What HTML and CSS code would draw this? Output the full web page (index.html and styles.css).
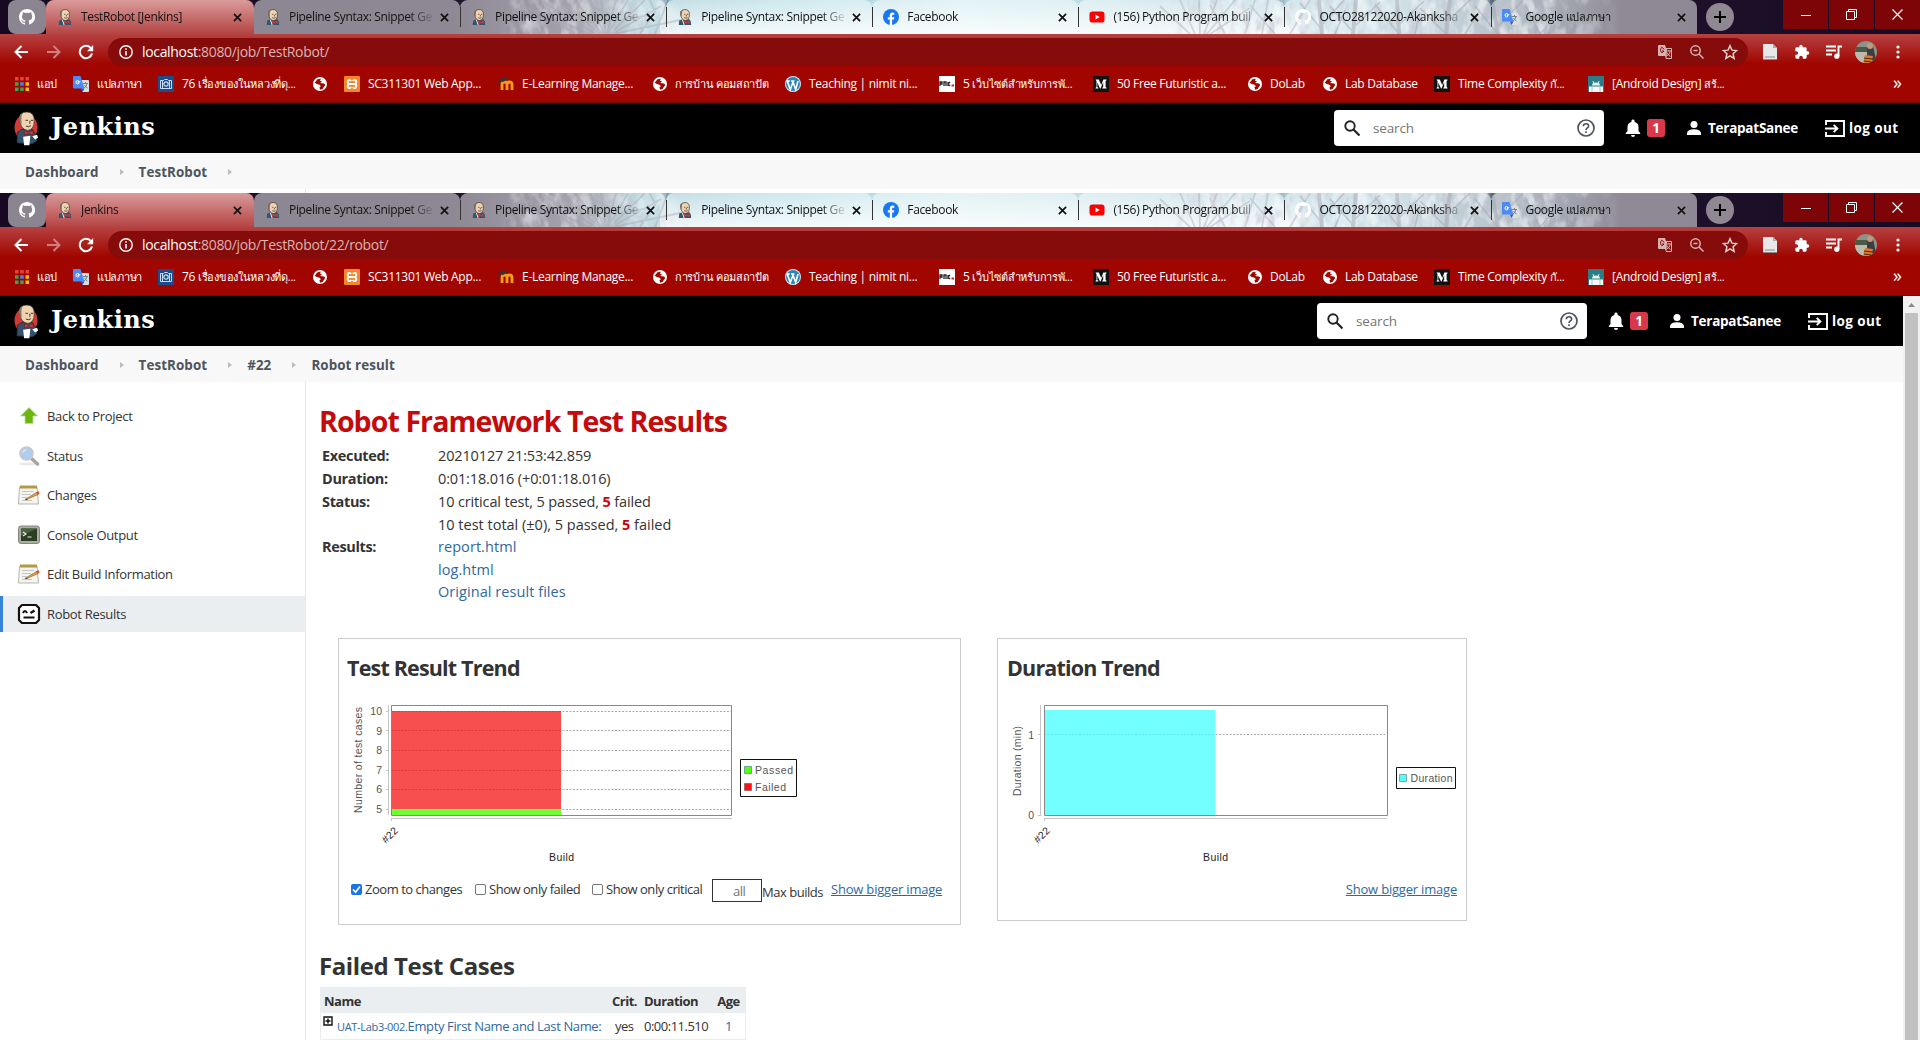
FILE: index.html
```html
<!DOCTYPE html>
<html lang="en">
<head>
<meta charset="utf-8">
<title>Jenkins</title>
<link rel="stylesheet" href="styles.css">
</head>
<body>
<svg class="defs" width="0" height="0" aria-hidden="true">
  <defs>
    <linearGradient id="sky" x1="0" x2="1" y1="0" y2="0">
      <stop offset="0" stop-color="#170922"/><stop offset=".235" stop-color="#1c1029"/>
      <stop offset=".3" stop-color="#4a4658"/><stop offset=".335" stop-color="#86b9c6"/>
      <stop offset=".4" stop-color="#9bd0db"/><stop offset=".5" stop-color="#c8e6ea"/>
      <stop offset=".57" stop-color="#bcdde4"/><stop offset=".64" stop-color="#a5cdd8"/>
      <stop offset=".72" stop-color="#a9cbd6"/><stop offset=".79" stop-color="#657a8c"/>
      <stop offset=".845" stop-color="#1f142d"/><stop offset="1" stop-color="#170922"/>
    </linearGradient>
    <linearGradient id="haze" x1="0" x2="0" y1="0" y2="1">
      <stop offset="0" stop-color="#fff" stop-opacity="0"/><stop offset="1" stop-color="#fff" stop-opacity=".75"/>
    </linearGradient>
    <linearGradient id="edge" x1="0" x2="1" y1="0" y2="0">
      <stop offset="0" stop-color="#000"/><stop offset=".15" stop-color="#fff"/><stop offset=".85" stop-color="#fff"/><stop offset="1" stop-color="#000"/>
    </linearGradient>
    <mask id="fadeL"><rect x="500" width="190" height="34" fill="url(#edge)"/></mask>
    <mask id="fadeR"><rect x="1150" width="470" height="34" fill="url(#edge)"/></mask>
    <filter id="snow" x="0" y="0" width="1" height="1">
      <feTurbulence type="fractalNoise" baseFrequency=".09 .05" numOctaves="3" seed="7"/>
      <feColorMatrix values="0 0 0 0 .88  0 0 0 0 .96  0 0 0 0 .98  4 0 0 0 -1.8"/>
    </filter>
    <filter id="twigs" x="0" y="0" width="1" height="1">
      <feTurbulence type="fractalNoise" baseFrequency=".12 .06" numOctaves="3" seed="21"/>
      <feColorMatrix values="0 0 0 0 .28  0 0 0 0 .26  0 0 0 0 .36  0 4 0 0 -1.9"/>
    </filter>
    <symbol id="wall" viewBox="0 0 1920 34">
      <rect width="1920" height="34" fill="url(#sky)"/>
      <rect x="660" width="640" height="34" fill="url(#haze)"/>
      <g mask="url(#fadeL)"><rect x="500" width="190" height="34" filter="url(#twigs)" opacity=".5"/><rect x="500" width="190" height="34" filter="url(#snow)" opacity=".4"/></g>
      <g mask="url(#fadeR)"><rect x="1150" width="470" height="34" filter="url(#twigs)" opacity=".55"/><rect x="1150" width="470" height="34" filter="url(#snow)" opacity=".55"/></g>
      <g fill="none" stroke="#4a4660" stroke-width="1.8" opacity=".4">
        <path d="M600 34 560 0M602 34 575 0M604 34 590 0M606 34 601 0M607 34 616 0M608 34 628 0M610 34 645 0M612 34 661 6M596 34 540 0M590 34 520 4M614 34 680 20M600 22 570 20M610 15 590 5M620 20 650 15M640 34 655 12 650 0M655 34 668 0M575 34 545 12"/>
        <path d="M1190 34 1160 6M1195 34 1180 0M1200 34 1199 0M1204 34 1217 0M1207 34 1235 0M1210 34 1250 8M1225 34 1210 5M1245 34 1255 0M1262 34 1268 0M1275 34 1250 5M1290 34 1310 0"/>
      </g>
      <g fill="none" stroke="#474a60" opacity=".5">
        <path stroke-width="4" d="M1322 34 1319 0M1353 34 1356 0M1399 34 1397 0M1446 34 1450 0M1498 34 1492 0"/>
        <path stroke-width="1.6" d="M1322 30 1300 3M1322 25 1344 0M1353 32 1330 6M1353 28 1380 2M1399 34 1375 4M1399 25 1424 1M1446 34 1420 8M1446 23 1470 0M1498 34 1475 6M1498 27 1523 0M1540 34 1525 4M1540 34 1570 0M1335 34 1345 10M1415 34 1420 12M1465 34 1480 10"/>
      </g>
    </symbol>
    <symbol id="github" viewBox="0 0 16 16"><path fill="#fff" d="M8 0C3.58 0 0 3.58 0 8c0 3.54 2.29 6.53 5.47 7.59.4.07.55-.17.55-.38v-1.49C3.78 14.2 3.3 12.66 3.3 12.66c-.36-.93-.89-1.17-.89-1.17C1.7 11 2.5 11 2.5 11c.8.06 1.23.83 1.23.83.7 1.2 1.87.87 2.33.66.07-.52.28-.87.5-1.07C4.8 11.2 3 10.5 3 7.47c0-.88.3-1.6.82-2.15-.08-.2-.36-1.02.08-2.12 0 0 .67-.22 2.2.82a7.7 7.7 0 0 1 4 0c1.53-1.04 2.2-.82 2.2-.82.44 1.1.16 1.92.08 2.12.51.56.82 1.27.82 2.15 0 3.07-1.87 3.75-3.65 3.95.29.25.54.73.54 1.48v2.31c0 .21.15.46.55.38A8 8 0 0 0 8 0z"/></symbol>
    <symbol id="butler" viewBox="0 0 16 18">
      <path d="M1 18 1.500 13 5 11.500 13 11.500 14.500 14 15 18z" fill="#33566f"/>
      <path d="M3 6Q2.500 1 8 .6 13 .6 13 6 13 12.500 8.500 13 4 12.500 3 6z" fill="#efd3b1" stroke="#332c28" stroke-width=".7"/>
      <path d="M3 7Q1.500 1.500 5.500 1 4 3.500 4.300 7L4 9z" fill="#777069"/>
      <path d="M7 6h1.500M10.300 6h1.500M7 9.800q2 1 4 0M9.500 6.500v2" fill="none" stroke="#3b2b25" stroke-width=".8"/>
      <path d="m7 13 3 1.500 3-1.500v4l-3-1.500L7 17z" fill="#d33833"/><path d="M5 12 7 18" stroke="#fff" stroke-width="1"/>
    </symbol>
    <symbol id="translate" viewBox="0 0 16 16">
      <path fill="#dedede" d="M6.500 4H15q1 0 1 1v10q0 1-1 1H9.500z"/><path fill="#4c8bf5" d="M1 0h6.500L11.500 12.500H1q-1 0-1-1V1q0-1 1-1z"/><path fill="#2c56c4" d="M8 12.500h3.500L9.500 16z"/>
      <path d="M7.300 5.700H5v1h1.200Q5.800 8 4.500 8 3 7.900 3 6.200 3 4.600 4.500 4.500q.8 0 1.400.6" fill="none" stroke="#fff"/><path d="M10 7.500h5M12.500 6v1.500M14 7.500q-.5 3-3 4.500M11.500 9q1 2 3 3" fill="none" stroke="#6b7888" stroke-width=".9"/>
    </symbol>
    <symbol id="globe" viewBox="0 0 14 14"><circle cx="7" cy="7" r="7" fill="#fff"/><path fill="#a00500" d="M4.500 2.300 8 1.700 6.800 3.400 9 4.500 7 6l4 .5q1.300.4 1 1.800L9.500 12 7 12.700 6.500 10l1.500-.8L6.500 7.800 3.800 7 1.700 5.700z"/></symbol>
    <symbol id="close" viewBox="0 0 10 10"><path d="m1 1 8 8M9 1 1 9" stroke="#111" stroke-width="1.9"/></symbol>
    <symbol id="facebook" viewBox="0 0 16 16"><circle cx="8" cy="8" r="8" fill="#1977f3"/><path fill="#fff" d="M6.800 16v-5.500H4.800V8.200h2V6.400Q6.800 3.500 9.600 3.500l1.700.2v2h-1.100Q9.100 5.700 9.100 6.800v1.400h2.200l-.4 2.300H9.100V16z"/></symbol>
    <symbol id="youtube" viewBox="0 0 16 16"><rect x=".5" y="2.500" width="15" height="11" rx="2.800" fill="#f00"/><path d="m6.500 5.500 4.200 2.500-4.200 2.500z" fill="#fff"/></symbol>
    <symbol id="back" viewBox="0 0 14 14"><path d="M14 7H2M7.500 1 1.500 7l6 6" fill="none" stroke="currentColor" stroke-width="2"/></symbol>
    <symbol id="reload" viewBox="0 0 16 16"><path d="M13 4.300A6.200 6.200 0 1 0 14 9.500" fill="none" stroke="#fff" stroke-width="2.100"/><path d="M15.200 1v6.200H9z" fill="#fff"/></symbol>
    <symbol id="info" viewBox="0 0 14 14"><circle cx="7" cy="7" r="6.200" fill="none" stroke="#fff" stroke-width="1.400"/><path d="M7 6v4.500M7 3.300v1.500" stroke="#fff" stroke-width="1.600"/></symbol>
    <symbol id="trans2" viewBox="0 0 14 14"><path fill="#d6b3b3" d="M1 0h6l1 3h5q1 0 1 1v9q0 1-1 1H8l-1-3H1q-1 0-1-1V1q0-1 1-1z"/><path d="M9 4h4v9H8.500" fill="#850c0b"/><path d="M6 4.500Q3-.5 2.500 5.500q1 4 3.500.5H4" fill="none" stroke="#850c0b" stroke-width="1"/><path d="M8.500 6h4.500M10.800 5v1M12.300 6.500q-1 3.500-3.800 4.500M9 7.500q1 2.500 3.500 4" fill="none" stroke="#d6b3b3" stroke-width="1"/></symbol>
    <symbol id="zoomout" viewBox="0 0 14 14"><circle cx="5.500" cy="5.500" r="4.700" fill="none" stroke="#d6b3b3" stroke-width="1.500"/><path d="m9 9 4.500 4.500M3.500 5.500h4" stroke="#d6b3b3" stroke-width="1.500"/></symbol>
    <symbol id="star" viewBox="0 0 24 24"><path d="m12 2.500 2.900 6.700 7.100.6-5.400 4.800 1.600 7.100-6.200-3.800-6.200 3.800 1.600-7.100L2 9.800l7.100-.6z" fill="none" stroke="#e6d0d0" stroke-width="2.200"/></symbol>
    <symbol id="doc" viewBox="0 0 14 16"><path d="M0 0h10l4 4v12H0z" fill="#e8e8e8"/><path d="M10 0v4h4z" fill="#aaa"/><path d="M2 13h10M0 15.500h14" stroke="#888"/></symbol>
    <symbol id="puzzle" viewBox="0 0 24 24"><path fill="#fff" d="M20.500 11H19V7a2 2 0 0 0-2-2h-4V3.500a2.500 2.500 0 0 0-5 0V5H4a2 2 0 0 0-2 2v3.800h1.500a2.700 2.700 0 0 1 0 5.400H2V20a2 2 0 0 0 2 2h3.800v-1.500a2.700 2.700 0 0 1 5.400 0V22H17a2 2 0 0 0 2-2v-4h1.500a2.500 2.500 0 0 0 0-5z"/></symbol>
    <symbol id="media" viewBox="0 0 16 14"><path d="M0 1.500h10M0 5.500h10M0 9.500h6" stroke="#fff" stroke-width="1.800"/><path d="M16 1.500h-3.500V11" stroke="#fff" stroke-width="1.900" fill="none"/><circle cx="10.800" cy="11.200" r="2.600" fill="#fff"/></symbol>
    <symbol id="avatar" viewBox="0 0 22 22"><clipPath id="round"><circle cx="11" cy="11" r="11"/></clipPath><g clip-path="url(#round)"><path fill="#8a9385" d="M0 0h22v22H0z"/><path fill="#4b5a44" d="M0 6h12v5H0z"/><path fill="#bdb9ac" d="M0 11h14v11H0z"/><path fill="#3b3c44" d="m12 6 6-1 3 14H12z"/><circle cx="15" cy="5" r="3" fill="#c39a80"/><path fill="#e37a20" d="m10 14 8 1-2 7H8z"/><path d="m9 17 8 1M9 20l7 1" stroke="#402616"/></g></symbol>
    <symbol id="dots" viewBox="0 0 4 14"><circle cx="2" cy="2" r="1.600" fill="#fff"/><circle cx="2" cy="7" r="1.600" fill="#fff"/><circle cx="2" cy="12" r="1.600" fill="#fff"/></symbol>
    <symbol id="apps" viewBox="0 0 14 14"><path fill="#ea4335" d="M0 0h3.500v3.500H0zM5.200 0h3.500v3.500H5.200zM10.500 0H14v3.500h-3.500z"/><path fill="#34a853" d="M0 5.200h3.500v3.500H0zM0 10.500h3.500V14H0zM5.200 10.500h3.500V14H5.200z"/><path fill="#4285f4" d="M5.200 5.200h3.500v3.500H5.200z"/><path fill="#fbbc05" d="M10.500 5.200H14v3.500h-3.500zM10.500 10.500H14V14h-3.500z"/></symbol>
    <symbol id="camera" viewBox="0 0 16 16"><path fill="#1c4c8c" d="M0 0h16v16H0z"/><path d="M2.500 12.500v-8h3l1-1h3l1 1h3v8zM4.500 5v7M11.500 5v7" fill="none" stroke="#c9dcf3" stroke-width="1"/><circle cx="8" cy="8" r="2.200" fill="none" stroke="#c9dcf3" stroke-width="1.200"/></symbol>
    <symbol id="xampp" viewBox="0 0 16 16"><rect width="16" height="16" rx="1" fill="#f5842a"/><path d="M7.200 5Q6 3.500 4.500 4 2.800 5.500 4.500 8 2.800 10.500 4.500 12q1.700.5 2.800-1M8.800 5Q10 3.500 11.500 4q1.700 1.500 0 4 1.700 2.500 0 4-1.700.5-2.800-1M5 8h6" fill="none" stroke="#fff" stroke-width="1.800"/></symbol>
    <symbol id="moodle" viewBox="0 0 16 16"><path d="M4 14V8.500Q4 6 6.500 6T9 8.500V14M9 14V8.500Q9 6 11.500 6T14 8.500V14" fill="none" stroke="#f59b1b" stroke-width="2.800"/><path d="M0 4 7 1l3 2-5 3z" fill="#333"/><path d="M1 4.500v5" stroke="#333"/></symbol>
    <symbol id="wp" viewBox="0 0 16 16"><circle cx="8" cy="8" r="8" fill="#d5eaf4"/><circle cx="8" cy="8" r="7" fill="#2a86b8"/><path d="m2.300 5 3 8.500L8 6l2.700 7.500L13 5M1.800 5h3M6 5h3.500" fill="none" stroke="#fff" stroke-width="1.600"/></symbol>
    <symbol id="park" viewBox="0 0 16 16"><path fill="#fff" d="M0 0h16v16H0z"/><path d="M1 10V6h2v2H1M5 10V6h2v4M9 10V6M9 8l2-2M9 8l2 2" fill="none" stroke="#222" stroke-width="1.300"/><path d="M12.500 9.500H15" stroke="#c22" stroke-width="2"/></symbol>
    <symbol id="medium" viewBox="0 0 16 16"><path fill="#111" d="M0 0h16v16H0z"/><path d="M2.500 3.500h3.300L8.200 9l2.200-5.500h3.100v.8l-.9.800v5.900l.9.800v.7H9.300v-.7l.9-.8V6.200L7.500 12.500H7L4.300 6.500V11l1.100 1v.5H2.500V12l1-1V5z" fill="#fff"/></symbol>
    <symbol id="android" viewBox="0 0 16 16"><path fill="#2b7e88" d="M0 0h16v16H0z"/><path d="M1 10.500h14V16H1z" fill="#f4fbfa"/><path d="M4 9.500q0-3 4-3t4 3z" fill="#e9f6f3"/><path d="m4.800 5 1 2M11.200 5l-1 2" stroke="#e9f6f3"/><path d="M4 10.500V16M12 10.500V16" stroke="#9cc"/></symbol>
    <symbol id="logo" viewBox="0 0 26 36">
      <ellipse cx="12.500" cy="17" rx="12" ry="13.500" fill="#cf3a33"/>
      <path d="M3 33 3.500 22 8 19h11l4 6 1 6-5 3z" fill="#34506a" stroke="#15202b" stroke-width=".7"/>
      <path d="M6 10Q5 1 13 .8 21.500 1 21 10 21 19 14.500 20 7 19 6 10z" fill="#efd3b1" stroke="#3b332e" stroke-width=".7"/>
      <path d="M6 12Q3.500 4 9 2 7 6 8 12l-.5 3z" fill="#86796e"/>
      <path d="M12 9.500h2.500M17.500 9.500H20M12.500 15.500q3 1.500 5-.5M16.500 10v3" fill="none" stroke="#3b2b25" stroke-width="1"/>
      <path d="m11 20 4 2 5-2v5l-5-2-4 2z" fill="#d33833" stroke="#5c1512" stroke-width=".5"/>
      <path d="M9.500 26.500 17 25.500 16 35.500h-5.500zM19 26l5-1.500 1 3-3 2z" fill="#fff"/>
    </symbol>
    <symbol id="search" viewBox="0 0 16 16"><circle cx="6" cy="6" r="4.700" fill="none" stroke="#222" stroke-width="1.900"/><path d="m9.500 9.500 6 6" stroke="#222" stroke-width="2.200"/></symbol>
    <symbol id="help" viewBox="0 0 18 18"><circle cx="9" cy="9" r="8" fill="none" stroke="#4d545d" stroke-width="1.700"/><path d="M6.300 7.200Q6.400 4.700 9 4.700t2.700 2.300Q11.700 8.200 9.900 9.300 9 10 9 11M9 12.300v1.800" fill="none" stroke="#4d545d" stroke-width="1.600"/></symbol>
    <symbol id="bell" viewBox="0 0 16 18"><path fill="#fff" d="M8 18a2 2 0 0 0 2-2H6a2 2 0 0 0 2 2zM13.500 12V8Q13.400 4 9.600 3V2Q9.500.6 8 .6T6.400 2v1Q2.600 4 2.500 8v4L.8 14v1h14.400v-1z"/></symbol>
    <symbol id="person" viewBox="0 0 14 14"><circle cx="7" cy="3.500" r="3.500" fill="#fff"/><path d="M0 14v-2q.5-3.500 7-3.700 6.500.2 7 3.700v2z" fill="#fff"/></symbol>
    <symbol id="logout" viewBox="0 0 20 17"><path d="M1 5V1h18v15H1v-4" fill="none" stroke="#fff" stroke-width="1.900"/><path d="M0 8.500h12M8.700 4.800l3.700 3.700-3.700 3.700" fill="none" stroke="#fff" stroke-width="1.900"/></symbol>
    <symbol id="notepad" viewBox="0 0 22 20"><path d="M1.500 2h17.500L20.500 19H.5z" fill="#f4f4f1" stroke="#b5b5b0"/><path d="M2 .5h17v3H2z" fill="#b19a45"/><path d="M4 6.500h12M4 9.500h9M4 12.500h5M4 15.500h10" stroke="#c6c6c6"/><path d="m7 14.500 11.500-7 1.500 2-11 5z" fill="#d9a24a" stroke="#8a6023" stroke-width=".6"/><path d="m18 7.500 2.500-1.300 1.200 2L20 9.500z" fill="#d9452b"/><path d="m6.500 15 2.500-1.500.6 1z" fill="#333"/></symbol>
  </defs>
</svg>

<section class="browser">
  <div class="tabstrip">
    <svg class="wall" preserveAspectRatio="none"><use href="#wall"/></svg>
    <div class="tab pinned"><svg class="i16"><use href="#github"/></svg></div>
    <div class="tab active"><svg class="fav"><use href="#butler"/></svg><span class="title">TestRobot [Jenkins]</span><svg class="x"><use href="#close"/></svg></div>
    <div class="tab"><svg class="fav"><use href="#butler"/></svg><span class="title">Pipeline Syntax: Snippet Ge</span><svg class="x"><use href="#close"/></svg></div>
    <div class="tab line"><svg class="fav"><use href="#butler"/></svg><span class="title">Pipeline Syntax: Snippet Ge</span><svg class="x"><use href="#close"/></svg></div>
    <div class="tab line"><svg class="fav"><use href="#butler"/></svg><span class="title">Pipeline Syntax: Snippet Ge</span><svg class="x"><use href="#close"/></svg></div>
    <div class="tab line"><svg class="fav"><use href="#facebook"/></svg><span class="title">Facebook</span><svg class="x"><use href="#close"/></svg></div>
    <div class="tab line"><svg class="fav"><use href="#youtube"/></svg><span class="title">(156) Python Program buil</span><svg class="x"><use href="#close"/></svg></div>
    <div class="tab line"><svg class="fav"><use href="#github"/></svg><span class="title">OCTO28122020-Akanksha</span><svg class="x"><use href="#close"/></svg></div>
    <div class="tab line"><svg class="fav"><use href="#translate"/></svg><span class="title">Google <span class="thai">แปลภาษา</span></span><svg class="x"><use href="#close"/></svg></div>
    <div class="newtab"><svg width="12" height="12" viewBox="0 0 12 12"><path d="M6 0v12M0 6h12" stroke="#000" stroke-width="2"/></svg></div>
    <div class="winbtns">
      <span><svg width="10" height="10"><path d="M0 5.500h10" stroke="#fff"/></svg></span>
      <span><svg width="11" height="11"><path d="M.5 2.500h8v8h-8zM2.500 2V.5h8v8H9" fill="none" stroke="#fff"/></svg></span>
      <span><svg width="11" height="11"><path d="m.5.5 10 10m0-10-10 10" stroke="#fff" stroke-width="1.200"/></svg></span>
    </div>
  </div>
  <div class="toolbar">
    <svg class="nav"><use href="#back"/></svg><svg class="nav fwd"><use href="#back"/></svg><svg class="nav rel"><use href="#reload"/></svg>
    <div class="address"><svg class="i14"><use href="#info"/></svg><span class="url"><b>localhost</b>:8080/job/TestRobot/</span>
      <svg class="i14 push"><use href="#trans2"/></svg><svg class="i14"><use href="#zoomout"/></svg><svg class="i16"><use href="#star"/></svg></div>
    <svg class="docico"><use href="#doc"/></svg><svg class="i16 puz"><use href="#puzzle"/></svg><svg class="media"><use href="#media"/></svg><svg class="ava"><use href="#avatar"/></svg><svg class="dots"><use href="#dots"/></svg>
  </div>
  <div class="bookmarks">
    <a><svg class="i14"><use href="#apps"/></svg><span class="thai">แอป</span></a>
    <a><svg class="i16"><use href="#translate"/></svg><span class="thai">แปลภาษา</span></a>
    <a><svg class="i16"><use href="#camera"/></svg><span>76 <span class="thai">เรื่องของในหลวงที่ดุ...</span></span></a>
    <a><svg class="i14"><use href="#globe"/></svg></a>
    <a><svg class="i16"><use href="#xampp"/></svg><span>SC311301 Web App...</span></a>
    <a><svg class="i16"><use href="#moodle"/></svg><span>E-Learning Manage...</span></a>
    <a><svg class="i14"><use href="#globe"/></svg><span class="thai">การบ้าน คอมสถาปัต</span></a>
    <a><svg class="i16"><use href="#wp"/></svg><span>Teaching | nimit ni...</span></a>
    <a><svg class="i16"><use href="#park"/></svg><span>5 <span class="thai">เว็บไซต์สำหรับการพั...</span></span></a>
    <a><svg class="i16"><use href="#medium"/></svg><span>50 Free Futuristic a...</span></a>
    <a><svg class="i14"><use href="#globe"/></svg><span>DoLab</span></a>
    <a><svg class="i14"><use href="#globe"/></svg><span>Lab Database</span></a>
    <a><svg class="i16"><use href="#medium"/></svg><span>Time Complexity <span class="thai">กั...</span></span></a>
    <a><svg class="i16"><use href="#android"/></svg><span>[Android Design] <span class="thai">สร้...</span></span></a>
    <a class="more">»</a>
  </div>
  <header class="jheader">
    <svg class="logo"><use href="#logo"/></svg><span class="brand">Jenkins</span>
    <div class="searchbox"><svg class="i16"><use href="#search"/></svg><span>search</span><svg class="i18"><use href="#help"/></svg></div>
    <svg class="bell"><use href="#bell"/></svg><span class="badge">1</span>
    <svg class="person"><use href="#person"/></svg><span class="user">TerapatSanee</span>
    <svg class="logout"><use href="#logout"/></svg><span class="out">log out</span>
  </header>
  <nav class="crumbs"><span>Dashboard</span><i></i><span>TestRobot</span><i></i></nav>
  <div class="sliver"></div>
</section>

<section class="browser">
  <div class="tabstrip">
    <svg class="wall" preserveAspectRatio="none"><use href="#wall"/></svg>
    <div class="tab pinned"><svg class="i16"><use href="#github"/></svg></div>
    <div class="tab active"><svg class="fav"><use href="#butler"/></svg><span class="title">Jenkins</span><svg class="x"><use href="#close"/></svg></div>
    <div class="tab"><svg class="fav"><use href="#butler"/></svg><span class="title">Pipeline Syntax: Snippet Ge</span><svg class="x"><use href="#close"/></svg></div>
    <div class="tab line"><svg class="fav"><use href="#butler"/></svg><span class="title">Pipeline Syntax: Snippet Ge</span><svg class="x"><use href="#close"/></svg></div>
    <div class="tab line"><svg class="fav"><use href="#butler"/></svg><span class="title">Pipeline Syntax: Snippet Ge</span><svg class="x"><use href="#close"/></svg></div>
    <div class="tab line"><svg class="fav"><use href="#facebook"/></svg><span class="title">Facebook</span><svg class="x"><use href="#close"/></svg></div>
    <div class="tab line"><svg class="fav"><use href="#youtube"/></svg><span class="title">(156) Python Program buil</span><svg class="x"><use href="#close"/></svg></div>
    <div class="tab line"><svg class="fav"><use href="#github"/></svg><span class="title">OCTO28122020-Akanksha</span><svg class="x"><use href="#close"/></svg></div>
    <div class="tab line"><svg class="fav"><use href="#translate"/></svg><span class="title">Google <span class="thai">แปลภาษา</span></span><svg class="x"><use href="#close"/></svg></div>
    <div class="newtab"><svg width="12" height="12" viewBox="0 0 12 12"><path d="M6 0v12M0 6h12" stroke="#000" stroke-width="2"/></svg></div>
    <div class="winbtns">
      <span><svg width="10" height="10"><path d="M0 5.500h10" stroke="#fff"/></svg></span>
      <span><svg width="11" height="11"><path d="M.5 2.500h8v8h-8zM2.500 2V.5h8v8H9" fill="none" stroke="#fff"/></svg></span>
      <span><svg width="11" height="11"><path d="m.5.5 10 10m0-10-10 10" stroke="#fff" stroke-width="1.200"/></svg></span>
    </div>
  </div>
  <div class="toolbar">
    <svg class="nav"><use href="#back"/></svg><svg class="nav fwd"><use href="#back"/></svg><svg class="nav rel"><use href="#reload"/></svg>
    <div class="address"><svg class="i14"><use href="#info"/></svg><span class="url"><b>localhost</b>:8080/job/TestRobot/22/robot/</span>
      <svg class="i14 push"><use href="#trans2"/></svg><svg class="i14"><use href="#zoomout"/></svg><svg class="i16"><use href="#star"/></svg></div>
    <svg class="docico"><use href="#doc"/></svg><svg class="i16 puz"><use href="#puzzle"/></svg><svg class="media"><use href="#media"/></svg><svg class="ava"><use href="#avatar"/></svg><svg class="dots"><use href="#dots"/></svg>
  </div>
  <div class="bookmarks">
    <a><svg class="i14"><use href="#apps"/></svg><span class="thai">แอป</span></a>
    <a><svg class="i16"><use href="#translate"/></svg><span class="thai">แปลภาษา</span></a>
    <a><svg class="i16"><use href="#camera"/></svg><span>76 <span class="thai">เรื่องของในหลวงที่ดุ...</span></span></a>
    <a><svg class="i14"><use href="#globe"/></svg></a>
    <a><svg class="i16"><use href="#xampp"/></svg><span>SC311301 Web App...</span></a>
    <a><svg class="i16"><use href="#moodle"/></svg><span>E-Learning Manage...</span></a>
    <a><svg class="i14"><use href="#globe"/></svg><span class="thai">การบ้าน คอมสถาปัต</span></a>
    <a><svg class="i16"><use href="#wp"/></svg><span>Teaching | nimit ni...</span></a>
    <a><svg class="i16"><use href="#park"/></svg><span>5 <span class="thai">เว็บไซต์สำหรับการพั...</span></span></a>
    <a><svg class="i16"><use href="#medium"/></svg><span>50 Free Futuristic a...</span></a>
    <a><svg class="i14"><use href="#globe"/></svg><span>DoLab</span></a>
    <a><svg class="i14"><use href="#globe"/></svg><span>Lab Database</span></a>
    <a><svg class="i16"><use href="#medium"/></svg><span>Time Complexity <span class="thai">กั...</span></span></a>
    <a><svg class="i16"><use href="#android"/></svg><span>[Android Design] <span class="thai">สร้...</span></span></a>
    <a class="more">»</a>
  </div>
  <div class="viewport">
    <div class="page">
      <header class="jheader">
        <svg class="logo"><use href="#logo"/></svg><span class="brand">Jenkins</span>
        <div class="searchbox"><svg class="i16"><use href="#search"/></svg><span>search</span><svg class="i18"><use href="#help"/></svg></div>
        <svg class="bell"><use href="#bell"/></svg><span class="badge">1</span>
        <svg class="person"><use href="#person"/></svg><span class="user">TerapatSanee</span>
        <svg class="logout"><use href="#logout"/></svg><span class="out">log out</span>
      </header>
      <nav class="crumbs"><span>Dashboard</span><i></i><span>TestRobot</span><i></i><span class="num">#22</span><i></i><span>Robot result</span></nav>
      <div class="columns">
        <aside class="side">
          <a><svg viewBox="0 0 22 20"><path d="M11 1.500 19.500 10H15v7.500H7V10H2.500z" fill="#6db611" stroke="#b9dba0" stroke-width=".8"/></svg><span>Back to Project</span></a>
          <a><svg viewBox="0 0 22 20"><ellipse cx="10" cy="18" rx="9" ry="1.500" fill="#e9e9e9"/><path d="m13.500 12.500 6 5.500" stroke="#a5a5a5" stroke-width="3.500" stroke-linecap="round"/><circle cx="8.500" cy="7.500" r="6.300" fill="#aecdf0" stroke="#c7c9cf" stroke-width="2"/><path d="M4.500 7Q5 3.500 9 3.500 6 5 4.500 7z" fill="#fff"/></svg><span>Status</span></a>
          <a><svg><use href="#notepad"/></svg><span>Changes</span></a>
          <a><svg viewBox="0 0 22 20"><rect x=".5" y="1" width="21" height="17.500" rx="2.500" fill="#a9ada4" stroke="#85887f"/><path d="M3 3.500h16v12.500H3z" fill="#2b3f24"/><path d="M3 3.500h16L3 11z" fill="#4b6340"/><path d="m5 7 3 2-3 2M9.500 12h4" fill="none" stroke="#e8efe4" stroke-width="1.200"/></svg><span>Console Output</span></a>
          <a><svg><use href="#notepad"/></svg><span>Edit Build Information</span></a>
          <a class="on"><svg viewBox="0 0 22 20"><path d="M4 1h14l3 3v12l-3 3H4l-3-3V4z" fill="#fff" stroke="#111" stroke-width="2.200" stroke-linejoin="round"/><path d="M5 9q1.800-4 4 0M12.500 9 16.500 6.500M5.500 13.500h11" fill="none" stroke="#111" stroke-width="2.200"/></svg><span>Robot Results</span></a>
        </aside>
        <main class="main">
          <h1>Robot Framework Test Results</h1>
          <dl class="facts">
            <dt>Executed:</dt><dd>20210127 21:53:42.859</dd>
            <dt>Duration:</dt><dd>0:01:18.016 (+0:01:18.016)</dd>
            <dt>Status:</dt><dd>10 critical test, 5 passed, <b>5</b> failed</dd>
            <dt></dt><dd class="wide">10 test total (±0), 5 passed, <b>5</b> failed</dd>
            <dt>Results:</dt><dd><a>report.html</a></dd>
            <dt></dt><dd><a>log.html</a></dd>
            <dt></dt><dd><a>Original result files</a></dd>
          </dl>
          <div class="trends">
            <section class="box results">
              <h2>Test Result Trend</h2>
              <svg class="chart" width="470" height="176" viewBox="348 696 470 176">
                <path d="M391 712.500h341M391 731.500h341M391 751.500h341M391 771.500h341M391 790.500h341M391 810.500h341" stroke="#aaa" stroke-dasharray="2 1.500"/>
                <path d="M391 712h170v98H391z" fill="#f41111" fill-opacity=".74"/><path d="M391 810h170v6H391z" fill="#6dff33"/>
                <path d="M391.500 706.500h340v110h-340z" fill="none" stroke="#888"/>
                <path d="M388.500 706v110M386 712.500h3M386 731.500h3M386 751.500h3M386 771.500h3M386 790.500h3M386 810.500h3M391 819.500h341M391.500 820v2" stroke="#c4c4c4" fill="none"/>
                <g class="tick"><text x="382" y="716">10</text><text x="382" y="735.500">9</text><text x="382" y="755">8</text><text x="382" y="775">7</text><text x="382" y="794">6</text><text x="382" y="814">5</text></g>
                <text class="axis" transform="translate(362 814) rotate(-90)" textLength="106">Number of test cases</text>
                <text class="cap" transform="translate(386 845) rotate(-45)" textLength="18">#22</text>
                <text class="cap" x="549" y="862" textLength="25">Build</text>
                <path d="M740.500 760.500h56v37h-56z" fill="#fff" stroke="#111"/>
                <path d="M744.500 767.500h7v7h-7z" fill="#5f1" stroke="#6a8"/><path d="M744.500 784.500h7v7h-7z" fill="#f11" stroke="#a66"/>
                <text class="axis" x="755" y="774.500" textLength="38">Passed</text><text class="axis" x="755" y="791.500" textLength="31">Failed</text>
              </svg>
              <div class="controls">
                <i class="cb checked"><svg width="11" height="11" viewBox="0 0 11 11"><path d="m2 5.500 2.500 2.700L9 2.500" fill="none" stroke="#fff" stroke-width="1.700"/></svg></i><span class="l1">Zoom to changes</span>
                <i class="cb"></i><span class="l2">Show only failed</span><i class="cb"></i><span class="l3">Show only critical</span>
                <span class="field">all</span><span class="max">Max builds</span><a class="big">Show bigger image</a>
              </div>
            </section>
            <section class="box duration">
              <h2>Duration Trend</h2>
              <svg class="chart" width="450" height="176" viewBox="1008 696 450 176">
                <path d="M1044 735.500h343" stroke="#aaa" stroke-dasharray="2 1.500"/>
                <path d="M1044 711h171v105h-171z" fill="#73ffff"/><path d="M1044 735.500h171" stroke="#5ce" stroke-opacity=".5" stroke-dasharray="2 1.500"/>
                <path d="M1044.500 706.500h343v110h-343z" fill="none" stroke="#888"/>
                <path d="M1040.500 706v110M1038 735.500h3M1038 816.500h3M1044 819.500h343M1044.500 820v2" stroke="#c4c4c4" fill="none"/>
                <g class="tick"><text x="1034" y="739.500">1</text><text x="1034" y="820">0</text></g>
                <text class="axis" transform="translate(1021 797) rotate(-90)" textLength="70">Duration (min)</text>
                <text class="cap" transform="translate(1038 845) rotate(-45)" textLength="18">#22</text>
                <text class="cap" x="1203" y="862" textLength="25">Build</text>
                <path d="M1396.500 768.500h59v21h-59z" fill="#fff" stroke="#111"/><path d="M1399.500 775.500h7v7h-7z" fill="#5ff" stroke="#7aa"/>
                <text class="axis" x="1410.500" y="783" textLength="42">Duration</text>
              </svg>
              <div class="controls end"><a class="big">Show bigger image</a></div>
            </section>
          </div>
          <h2 class="failed">Failed Test Cases</h2>
          <div class="table">
            <div class="tr th"><span>Name</span><span>Crit.</span><span>Duration</span><span class="c">Age</span></div>
            <div class="tr"><span class="name"><svg width="10" height="10"><path d="M1 1h8v8H1z" fill="#fff" stroke="#111" stroke-width="1.400"/><path d="M5 2.500v5M2.500 5h5" stroke="#111" stroke-width="1.500"/></svg><a class="pre">UAT-Lab3-002.</a><a class="case">Empty First Name and Last Name:</a></span><span class="yes">yes</span><span class="dur">0:00:11.510</span><span class="c"><a>1</a></span></div>
          </div>
        </main>
      </div>
    </div>
    <div class="scroll"><svg width="17" height="17"><path d="M5 11h7L8.500 7z" fill="#8b8b8b"/></svg><div class="thumb"></div></div>
  </div>
</section>
</body>
</html>
```
FILE: styles.css
```css
* { box-sizing: border-box; }
body { margin: 0; width: 1920px; height: 1040px; overflow: hidden; background: #fff; color: #333; font-family: "Open Sans", "Noto Sans", sans-serif; font-size: 12px; }
svg { display: block; flex: none; overflow: visible; }
.defs { position: absolute; }
.browser { width: 1920px; }
.i14 { width: 14px; height: 14px; }
.i16 { width: 16px; height: 16px; }
.i18 { width: 18px; height: 18px; }

/* tab strip */
.tabstrip { position: relative; display: flex; height: 34px; padding-left: 8px; background: #1a0b26; }
.wall { position: absolute; left: 0; top: 0; width: 1920px; height: 34px; }
.tab { position: relative; display: flex; align-items: center; width: 206.100px; height: 34px; padding-left: 11px; border-radius: 8px 8px 0 0; background: rgba(255,255,255,.5); color: #111; }
.tab.pinned { width: 38px; padding-left: 11px; border-radius: 8px; }
.tab.active { width: 208px; background: linear-gradient(#d99b9a, #b54444); }
.tab.line::before { content: ""; position: absolute; left: 0; top: 7px; width: 1px; height: 20px; background: #333; }
.fav { width: 16px; height: 16px; margin-right: 8px; }
.title { width: 148px; margin: -1px 3px 0 0; white-space: nowrap; letter-spacing: -.34px; -webkit-mask-image: linear-gradient(90deg, #000 120px, transparent 147px); }
.x { width: 9px; height: 9px; }
.active .x { margin-left: 1px; }
.newtab { position: relative; display: flex; align-items: center; justify-content: center; width: 28px; height: 28px; margin: 3px 0 0 9px; border-radius: 50%; background: #8f8893; }
.winbtns { position: relative; display: flex; gap: 1px; height: 29px; margin-left: auto; }
.winbtns span { display: flex; align-items: center; justify-content: center; width: 45px; background: #7e0507; }

/* address row */
.toolbar { display: flex; align-items: center; height: 36px; padding: 0 20px 0 14px; background: linear-gradient(#b64141, #a00500 30px); }
.nav { width: 14px; height: 14px; margin-right: 19px; color: #fff; }
.nav.fwd { margin-right: 17px; transform: scaleX(-1); color: #cf7f7e; }
.nav.rel { width: 16px; height: 16px; margin-right: 14px; }
.address { display: flex; align-items: center; gap: 18px; width: 1640px; height: 28px; padding: 0 10px 0 11px; border-radius: 14px; background: #850c0b; }
.url { margin: -1px 0 0 -9px; color: #dcb3b2; font-size: 14px; letter-spacing: -.33px; white-space: nowrap; }
.url b { color: #fff; font-weight: 400; }
.push { margin-left: auto; }
.docico { width: 14px; height: 16px; margin-left: 15px; }
.puz { margin-left: 17px; }
.media { width: 16px; height: 14px; margin-left: 16px; }
.ava { width: 22px; height: 22px; margin-left: 13px; }
.dots { width: 4px; height: 14px; margin-left: auto; }

/* bookmarks */
.bookmarks { display: grid; grid-template-columns: 58px 85px 155px 31px 154px 155px 132px 154px 154px 155px 75px 111px 154px 305px auto; align-items: center; height: 33px; padding: 0 0 5px 15px; border-bottom: 1px solid #7b0605; background: #a00500; color: #fff; }
.bookmarks a { display: flex; align-items: center; gap: 8px; white-space: nowrap; letter-spacing: -.28px; }
.thai { font-size: 11px; }
.bookmarks .thai { font-weight: 500; }
.bookmarks .more { height: 20px; margin-top: -3px; font-size: 18px; line-height: 20px; }

/* application header */
.jheader { display: flex; align-items: center; height: 50px; padding: 0 21px 0 14px; background: #000; color: #fff; font-size: 13.500px; font-weight: 700; letter-spacing: -.25px; white-space: nowrap; }
.logo { width: 25px; height: 35px; }
.brand { width: 106px; margin: -3px 0 0 12px; font: bold 24px "DejaVu Serif", serif; letter-spacing: .5px; }
.searchbox { display: flex; align-items: center; width: 270px; height: 36px; margin-left: auto; padding: 0 9px 0 10px; border-radius: 4px; background: #fff; color: #757575; font-weight: 400; letter-spacing: -.15px; }
.searchbox span { flex: 1; margin-left: 13px; }
.bell { width: 16px; height: 18px; margin-left: 21px; }
.badge { width: 18px; height: 18px; margin-left: 6px; border-radius: 3px; background: #d8384a; line-height: 18px; text-align: center; }
.person { width: 14px; height: 14px; margin-left: 22px; }
.user { width: 92px; margin-left: 7px; }
.logout { width: 20px; height: 17px; margin-left: 25px; }
.out { width: 50px; margin-left: 4px; letter-spacing: .4px; }
.crumbs { display: flex; align-items: center; height: 36px; padding: 1px 0 0 25px; background: #f8f8f8; color: #4d545d; font-size: 13.400px; font-weight: 700; white-space: nowrap; letter-spacing: .08px; }
.crumbs i { margin: 0 15px 0 21px; border: 3px solid transparent; border-left: 4px solid #bbb; border-right-width: 0; }
.sliver { width: 306px; height: 4px; border-right: 1px solid #e8e8ec; }

/* page */
.viewport { display: flex; height: 744px; }
.page { width: 1903px; }
.scroll { width: 17px; background: #f1f1f1; }
.thumb { width: 13px; height: 727px; margin-left: 2px; background: #c1c1c1; }
.columns { display: flex; height: 658px; }
.side { width: 306px; padding-top: 16px; border-right: 1px solid #e8e8ec; font-size: 13px; }
.side a { display: flex; align-items: center; height: 36px; margin-bottom: 3.600px; padding-left: 18px; white-space: nowrap; letter-spacing: -.32px; }
.side svg { width: 22px; height: 20px; margin-right: 7px; }
.side .on { padding-left: 15px; border-left: 3px solid #3584d7; background: #eaeef1; }
.main { flex: 1; padding: 19px 0 0 14px; overflow: hidden; }
h1, h2 { margin: 0; font-weight: 700; white-space: nowrap; }
h1 { height: 43px; margin-left: -1px; color: #c40a0a; font-size: 28.500px; line-height: 40px; letter-spacing: -.92px; }
.facts { display: grid; grid-template-columns: 116px 500px; grid-template-rows: 23px 23px 23px 22px 23px 22px 22px; margin: 0 0 0 2px; font-size: 14.500px; line-height: 23px; white-space: nowrap; letter-spacing: -.14px; }
.facts dt { font-weight: 700; letter-spacing: -.35px; }
.facts dd { margin: 0; }
.facts .wide { letter-spacing: 0; }
.facts b { color: #c40a0a; }
a { color: inherit; }
.facts a, .table a { color: #2f689f; }
.facts a { font-weight: 500; letter-spacing: .06px; }
.trends { display: flex; align-items: flex-start; gap: 36px; margin: 36px 0 0 18px; }
.box { padding: 16px 9px 0; border: 1px solid #ccc; }
.box h2 { height: 40px; margin-left: -1px; font-size: 21.500px; line-height: 26px; letter-spacing: -.82px; }
.results { width: 623px; height: 287px; }
.duration { width: 470px; height: 283px; padding-left: 10px; }
.chart { display: block; }
.chart text { font: 10.500px "Liberation Sans", Arial, sans-serif; fill: #555; }
.chart .tick text { text-anchor: end; }
.chart .cap { fill: #222; }
.controls { display: flex; align-items: center; height: 36px; padding: 0 4px 0 3px; font-size: 13px; white-space: nowrap; letter-spacing: -.47px; }
.controls.end { justify-content: flex-end; padding: 0; }
.cb { width: 11px; height: 11px; margin-right: 3px; border: 1px solid #767676; border-radius: 2px; }
.cb.checked { border: 0; background: #1a73e8; }
.l1 { width: 110px; } .l2 { width: 103px; } .l3 { width: 106px; }
.field { width: 50px; height: 23px; margin-top: 3px; padding-left: 20px; border: 1px solid #333; color: #757575; line-height: 22px; }
.max { width: 69px; margin: 6px 0 0; }
.big { color: #2f689f; text-decoration: underline; letter-spacing: -.2px; }
.failed { height: 42px; margin: 20px 0 0 -1px; font-size: 24px; line-height: 42px; letter-spacing: -.4px; }
.table { width: 426px; border: 1px solid #eaeef1; font-size: 13px; }
.tr { display: grid; grid-template-columns: 288px 32px 71px 30px; align-items: center; height: 26px; padding-left: 3px; white-space: nowrap; letter-spacing: -.5px; }
.th { height: 25px; background: #eaeef1; font-weight: 700; }
.c { padding-right: 3px; text-align: center; }
.name { display: flex; align-items: baseline; }
.name svg { align-self: flex-start; margin: -1px 4px 0 -1px; }
.pre { font-size: 11px; letter-spacing: -.32px; }
.case { letter-spacing: -.38px; }
.yes { padding-left: 3px; }
```
